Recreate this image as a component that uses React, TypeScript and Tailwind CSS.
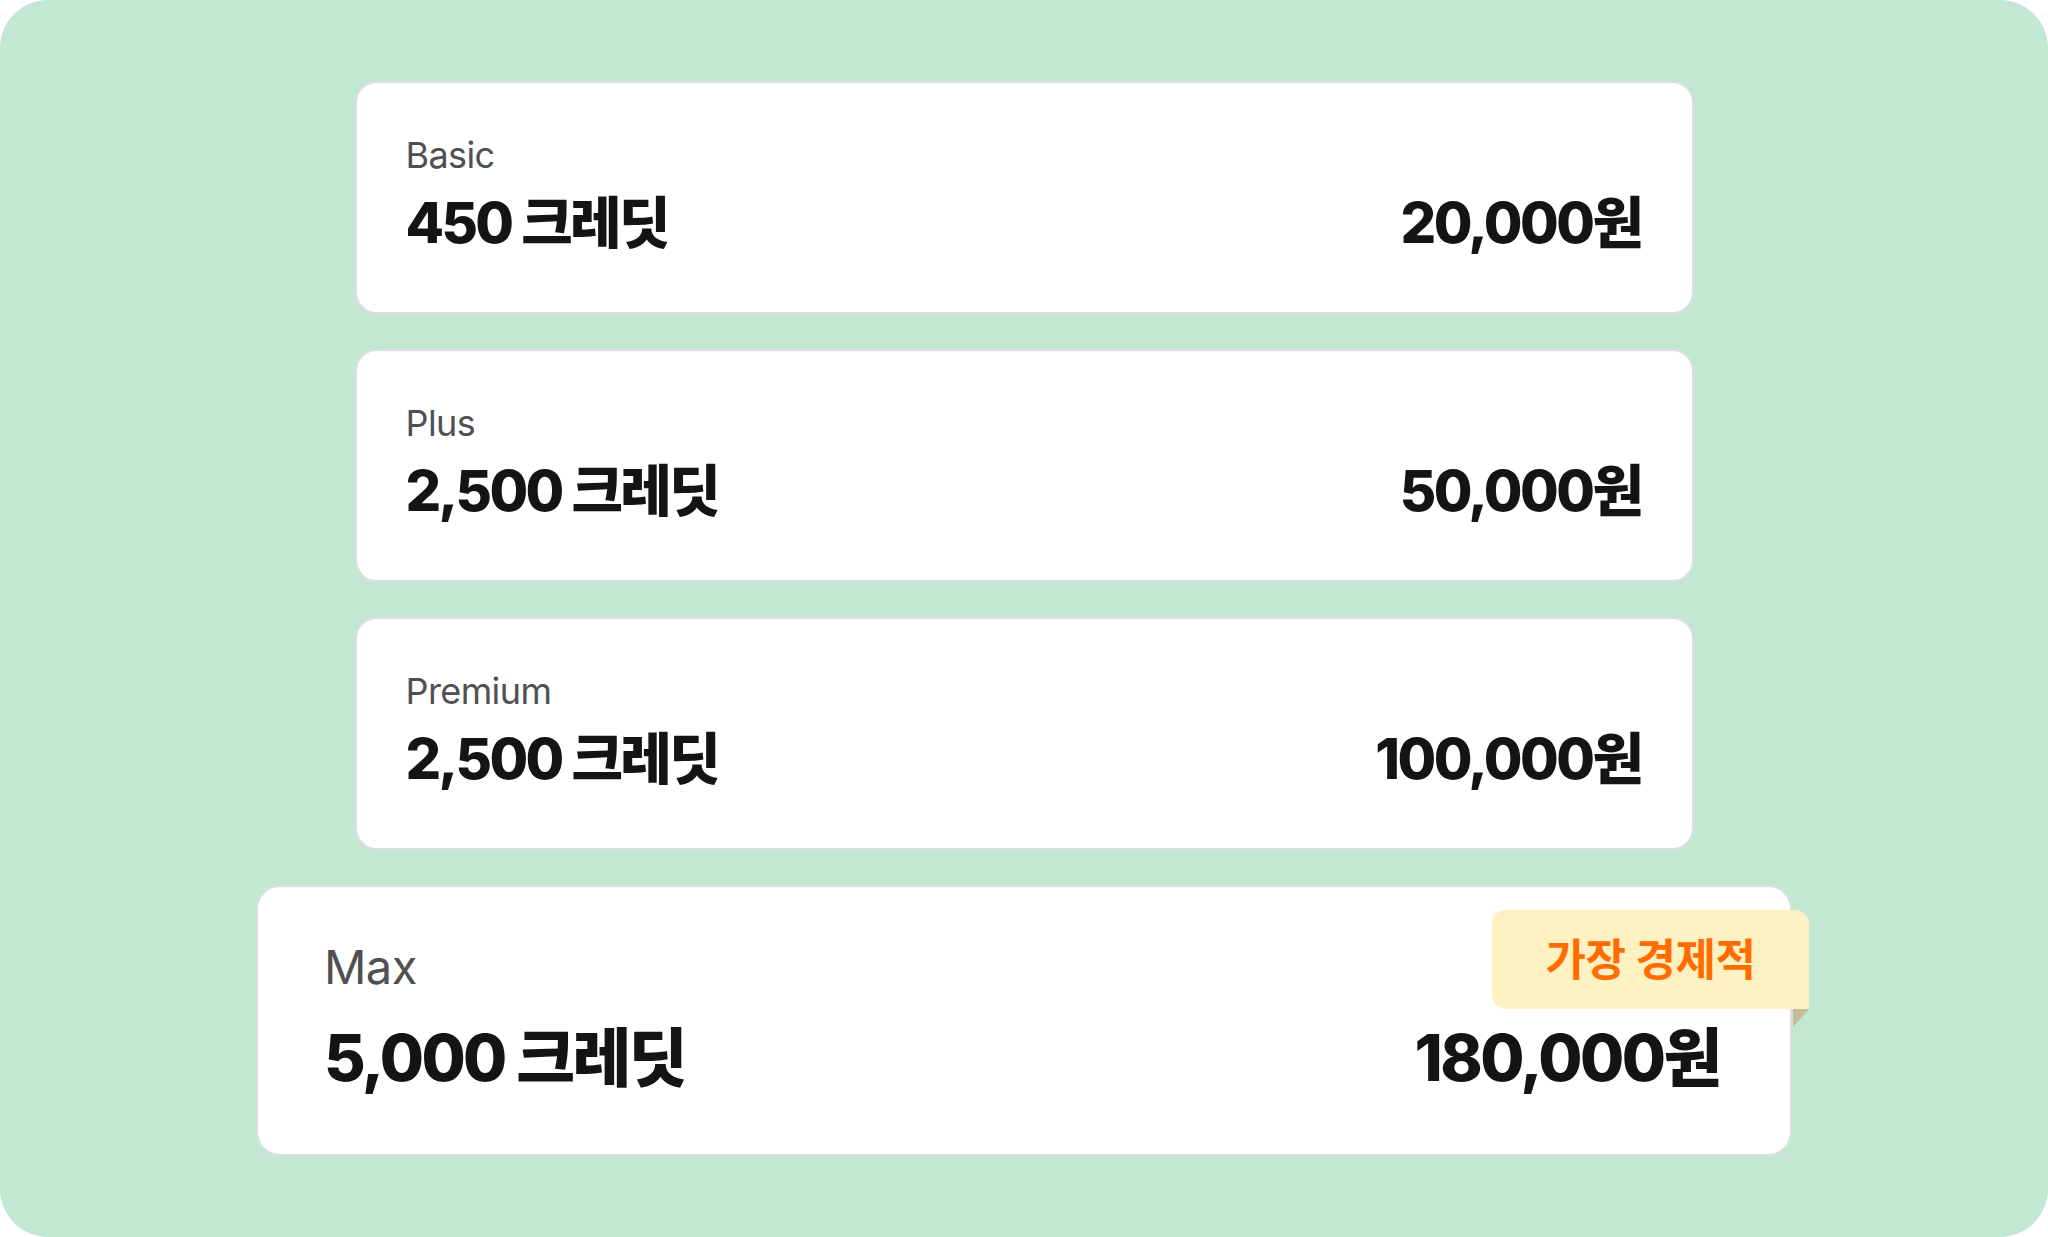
import React from "react";

const FONT = "font-['Inter','Noto_Sans_CJK_KR',sans-serif]";

type Plan = { name: string; credits: string; price: string };

const plans: Plan[] = [
  { name: "Basic", credits: "450 크레딧", price: "20,000원" },
  { name: "Plus", credits: "2,500 크레딧", price: "50,000원" },
  { name: "Premium", credits: "2,500 크레딧", price: "100,000원" },
];

function PlanCard({ plan }: { plan: Plan }) {
  return (
    <div className="w-[1339px] h-[233px] shrink-0 rounded-[22px] border-2 border-[#dedee2] bg-white pl-[49px] pr-[50px] pt-[54px] flex justify-between items-start">
      <div className="flex flex-col">
        <div className="text-[36px] leading-none text-[#505053] font-normal tracking-[-0.6px]">{plan.name}</div>
        <div className="mt-[22px] text-[56px] leading-none font-extrabold text-[#141416] tracking-[-2.6px]">{plan.credits}</div>
      </div>
      <div className="self-start mt-[58px] text-[56px] leading-none font-extrabold text-[#141416] tracking-[-2.5px]">{plan.price}</div>
    </div>
  );
}

export default function App() {
  return (
    <div className={`w-[2048px] h-[1237px] bg-white ${FONT}`}>
      <div className="w-full h-full rounded-[48px] bg-[#c2e8d4] flex flex-col items-center justify-center gap-[35px]">
        {plans.map((p) => (
          <PlanCard key={p.name} plan={p} />
        ))}
        <div className="relative w-[1536px] h-[271px] shrink-0 rounded-[24px] border-2 border-[#dedee2] bg-white pl-[66px] pr-[70px] pt-[56px] flex justify-between items-start">
          <div className="flex flex-col">
            <div className="text-[47px] leading-none text-[#505053] font-normal tracking-[-0.6px]">Max</div>
            <div className="mt-[36px] text-[64px] leading-none font-extrabold text-[#141416] tracking-[-2.6px]">5,000 크레딧</div>
          </div>
          <div className="self-start mt-[83px] text-[64px] leading-none font-extrabold text-[#141416] tracking-[-2.5px]">180,000원</div>
          <div className="absolute top-[23px] right-[-19px] w-[317px] h-[99px] bg-[#fff1c2] rounded-tl-[14px] rounded-tr-[14px] rounded-bl-[14px] flex items-center justify-center">
            <span className="text-[44px] font-bold text-[#ff6c00] leading-none tracking-[-0.5px]">가장 경제적</span>
            <div className="absolute right-0 top-full w-[16px] h-[18px] bg-[#c8bd98] [clip-path:polygon(0_0,100%_0,0_100%)]" />
          </div>
        </div>
      </div>
    </div>
  );
}
